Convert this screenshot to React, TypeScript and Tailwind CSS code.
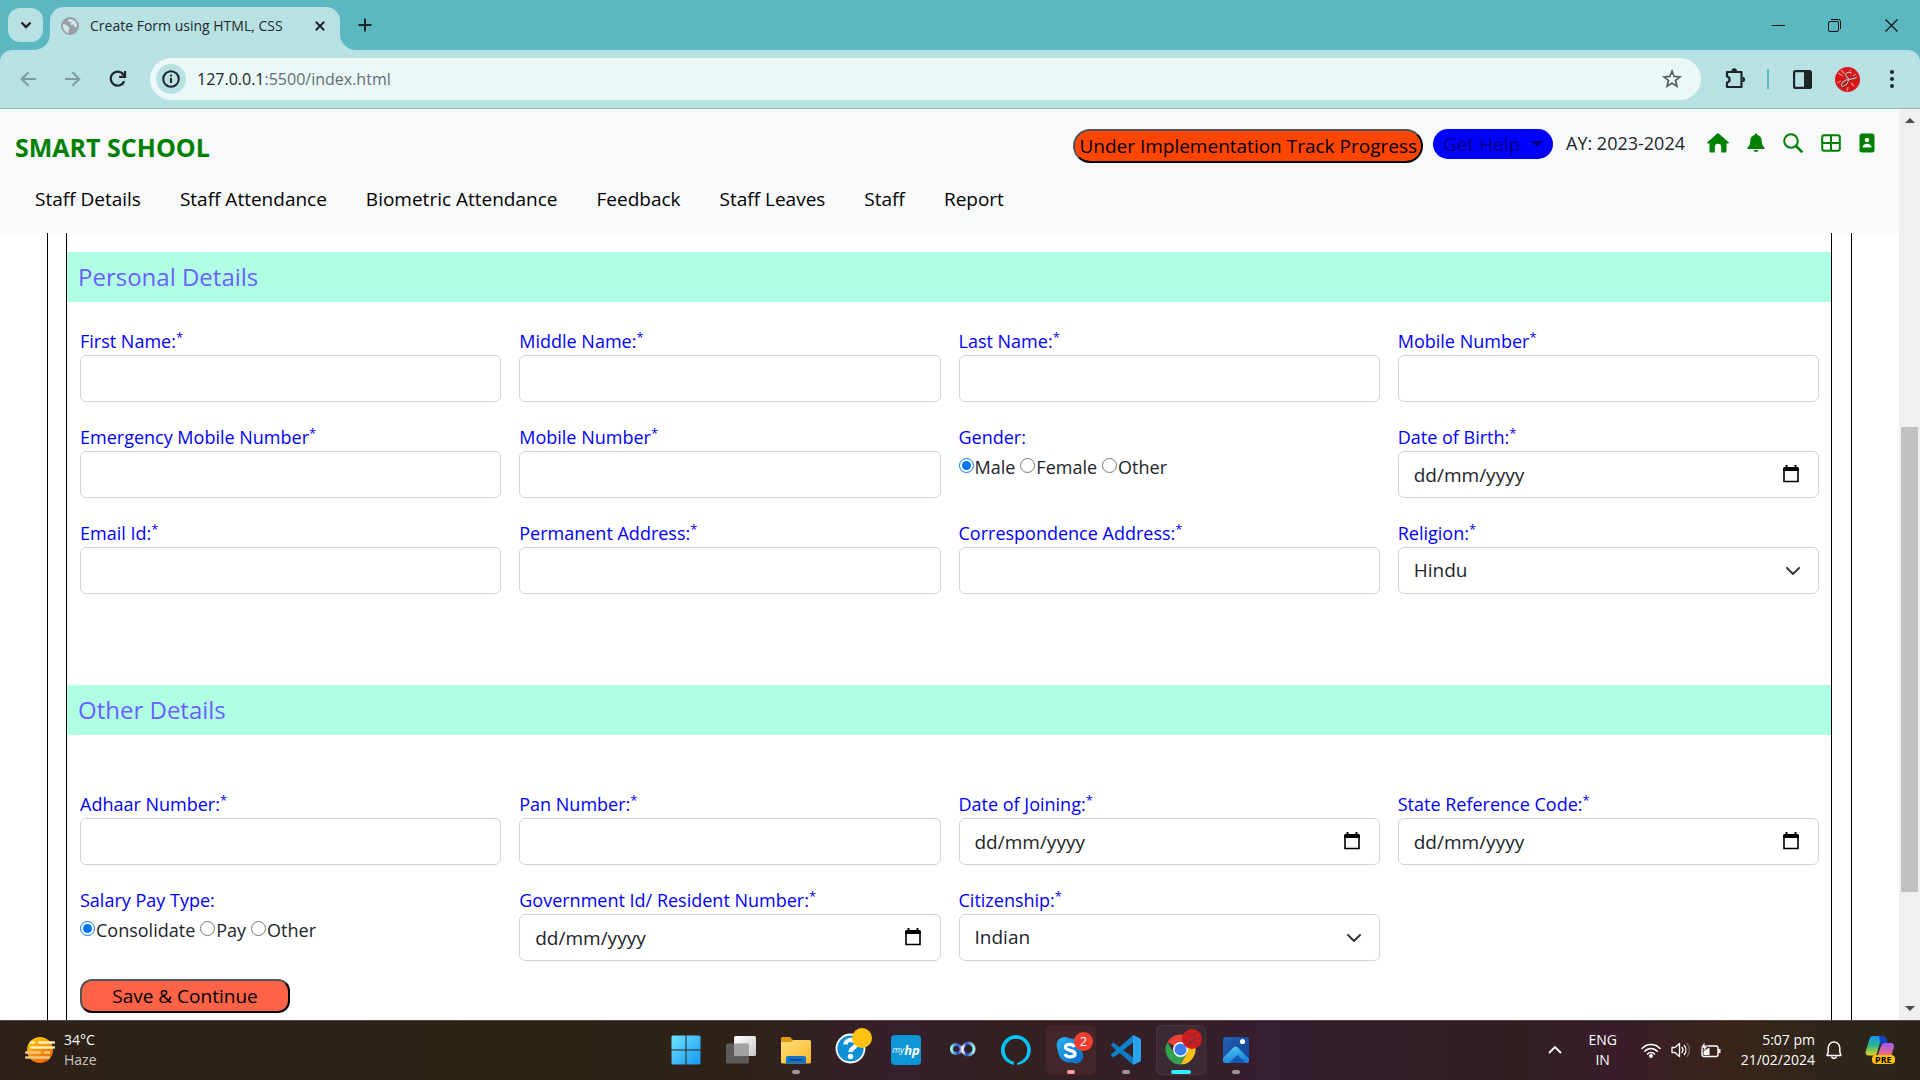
import React from "react";

const NAV = ["Staff Details", "Staff Attendance", "Biometric Attendance", "Feedback", "Staff Leaves", "Staff", "Report"];

/* ---------- browser chrome ---------- */

function TabStrip() {
  return (
    <div className="flex h-[50px] items-stretch bg-[#5bb8c1] text-[#1f2a2c]">
      <div className="flex w-[50px] items-center justify-end pr-[7px] pb-px">
        <button aria-label="Search tabs" className="flex h-[34px] w-[35px] items-center justify-center rounded-xl bg-[#b8e1e4]">
          <svg width="12" height="8" viewBox="0 0 12 8" fill="none" stroke="#1c2527" strokeWidth="2.4"><path d="M1.5 1.5 6 6l4.500-4.500" /></svg>
        </button>
      </div>
      <div className="relative mt-[7px] flex w-[290px] items-center rounded-t-[14px] bg-[#b8e1e4] pr-2 pb-[6px] pl-[11px]">
        <svg className="absolute bottom-0 -left-4" width="16" height="16"><path d="M16 0v16H0A16 16 0 0 0 16 0Z" fill="#b8e1e4" /></svg>
        <svg className="absolute -right-4 bottom-0" width="16" height="16"><path d="M0 0v16h16A16 16 0 0 1 0 0Z" fill="#b8e1e4" /></svg>
        <svg width="18" height="18" viewBox="0 0 18 18">
          <circle cx="9" cy="9" r="9" fill="#98a0a6" />
          <path d="M2 7c2 .3 3.500.3 4 1.800.4 1.200 2.500.6 2.500 2.200 0 1-.9 1.200-.9 2.400 0 1 .4 1.600.2 2.700C4 15.500 1.500 12 2 7Zm5-4.600c1 .8-.6 1.600.4 2.300 1 .6 2.600-.6 3 .6.3 1-1.700 1-1.400 2 .4 1 2-.3 3.200.3 1.300.6 1 2.400 2.700 2.600.6 0 .8-.3 1-.9C16.300 5 12.500 1.500 7 2.400Z" fill="#d3e6e9" />
        </svg>
        <span className="ml-[11px] flex-1 text-sm whitespace-nowrap">Create Form using HTML, CSS</span>
        <button aria-label="Close tab" className="flex size-6 items-center justify-center">
          <svg width="10" height="10" viewBox="0 0 10 10" stroke="#1c2527" strokeWidth="2"><path d="m.8.8 8.400 8.400M9.200.8.8 9.200" /></svg>
        </button>
      </div>
      <button aria-label="New tab" className="ml-3 flex w-[26px] items-center justify-center">
        <svg width="14" height="14" viewBox="0 0 14 14" stroke="#1c2527" strokeWidth="2"><path d="M7 .5v13M.5 7h13" /></svg>
      </button>
      <div className="flex flex-1 justify-end">
        <button aria-label="Minimize" className="flex w-14 items-center justify-center">
          <svg width="13" height="13" viewBox="0 0 13 13" stroke="#111" shapeRendering="crispEdges"><path d="M0 6.500h13" /></svg>
        </button>
        <button aria-label="Restore" className="flex w-14 items-center justify-center">
          <svg width="13" height="13" viewBox="0 0 13 13" fill="none" stroke="#111"><rect x=".5" y="2.500" width="10" height="10" rx="1.500" /><path d="M3 .5h7.500a2 2 0 0 1 2 2V10" /></svg>
        </button>
        <button aria-label="Close" className="flex w-[58px] items-center justify-center">
          <svg width="13" height="13" viewBox="0 0 13 13" stroke="#111" strokeWidth="1.200"><path d="m.5.5 12 12M12.500.5l-12 12" /></svg>
        </button>
      </div>
    </div>
  );
}

function Toolbar() {
  return (
    <div className="bg-[#5bb8c1]">
      <div className="flex h-[59px] items-center rounded-t-xl border-b border-[#8fb5ba] bg-[#b8e1e4]">
        <button aria-label="Back" className="flex w-[55px] items-center justify-center">
          <svg width="16" height="16" viewBox="0 0 16 16" fill="none" stroke="#7d9b9f" strokeWidth="2"><path d="M16 8H2M8.500 1.200 1.700 8l6.800 6.800" /></svg>
        </button>
        <button aria-label="Forward" className="flex w-9 items-center justify-center">
          <svg width="16" height="16" viewBox="0 0 16 16" fill="none" stroke="#7d9b9f" strokeWidth="2"><path d="M0 8h14M7.500 1.200 14.300 8l-6.800 6.800" /></svg>
        </button>
        <button aria-label="Reload" className="flex w-[54px] items-center justify-center">
          <svg width="18" height="18" viewBox="0 0 18 18" fill="none" stroke="#1c2527" strokeWidth="2.300"><path d="M15.200 11.200A7 7 0 1 1 14.400 4.500L16 6.300" /><path d="M16 1v5.800h-5.800" /></svg>
        </button>
        <div className="ml-[5px] flex h-[42px] flex-1 items-center rounded-full bg-[#ebf8f8] pr-[15px] pl-[6px]">
          <button aria-label="Site information" className="flex size-[30px] items-center justify-center rounded-full bg-[#b8e1e4]">
            <svg width="18" height="18" viewBox="0 0 18 18" fill="none" stroke="#1c2527" strokeWidth="2"><circle cx="9" cy="9" r="7.800" /><path d="M9 8v5M9 4.800v1.800" /></svg>
          </button>
          <div className="relative ml-[11px] flex-1">
            <input aria-label="Address" defaultValue="127.0.0.1:5500/index.html" className="w-full bg-transparent text-base text-transparent outline-none" />
            <div aria-hidden="true" className="pointer-events-none absolute inset-0 text-base text-[#5f6f72]">
              <span className="text-[#1c2527]">127.0.0.1</span>:5500/index.html
            </div>
          </div>
          <button aria-label="Bookmark this tab" className="flex size-7 items-center justify-center">
            <svg width="20" height="20" viewBox="0 0 20 20" fill="none" stroke="#5c5f66" strokeWidth="1.800"><path d="m10 2.200 2.200 5.300 5.700.4-4.400 3.700 1.400 5.600L10 14.200l-4.900 3 1.400-5.600-4.400-3.700 5.700-.4Z" /></svg>
          </button>
        </div>
        <button aria-label="Extensions" className="ml-[22px] flex size-6 items-center justify-center">
          <svg width="22" height="22" viewBox="0 0 22 22"><path d="M3 4h14.500v15H3v-4.500c3.500-.6 3.500-5.400 0-6Z" fill="none" stroke="#1c2527" strokeWidth="2.200" strokeLinejoin="round" /><path d="M7.500 3a2.700 2.700 0 0 1 5.400 0ZM18.500 8.800a2.600 2.600 0 0 1 0 5.200Z" fill="#1c2527" /></svg>
        </button>
        <div className="ml-[20px] h-5 w-[2px] bg-[#5bb8c1]" />
        <button aria-label="Side panel" className="ml-[21px] flex size-6 items-center justify-center">
          <svg width="19" height="19" viewBox="0 0 19 19"><rect x="1.100" y="1.100" width="16.800" height="16.800" rx="1.500" fill="none" stroke="#1c2527" strokeWidth="2.200" /><path d="M11 1h6.500v17H11Z" fill="#1c2527" /></svg>
        </button>
        <button aria-label="Profile" className="ml-5 flex size-[26px] items-center justify-center"><Avatar size={25} /></button>
        <button aria-label="Menu" className="mr-4 ml-5 flex w-6 items-center justify-center">
          <svg width="4" height="18" viewBox="0 0 4 18" fill="#1c2527"><circle cx="2" cy="2" r="2" /><circle cx="2" cy="9" r="2" /><circle cx="2" cy="16" r="2" /></svg>
        </button>
      </div>
    </div>
  );
}

function Avatar({ size }: { size: number }) {
  return (
    <svg width={size} height={size} viewBox="0 0 25 25">
      <circle cx="12.500" cy="12.500" r="12.500" fill="#d8161b" />
      <path d="M3 6 8 9M6 3l4 4M2 16l4-2M15 3l1 4M21 7l-3 2M19 19l-3-3M12 24l1-4" stroke="#f08a86" strokeWidth="1.200" />
      <path d="M16 6c-2-2-6 0-5 3 .6 1.600 3 1 2.500 4-.7 4-4 7-6.500 6-1.800-1 0-4 3-5.500s9-1 12-3.500" fill="none" stroke="#7a2023" strokeWidth="2.400" />
      <path d="M16 6c-2-2-6 0-5 3 .6 1.600 3 1 2.500 4-.7 4-4 7-6.500 6-1.800-1 0-4 3-5.500s9-1 12-3.500" fill="none" stroke="#e3c0b8" strokeWidth="1.100" />
    </svg>
  );
}

/* ---------- page ---------- */

function SiteHeader() {
  return (
    <header className="h-[124px] bg-[#f8f9fa] pt-5">
      <div className="flex h-[34px] items-start pr-6 pl-[15px]">
        <h1 className="flex-1 text-[25px] leading-9 font-bold text-[#008000]">SMART SCHOOL</h1>
        <button className="h-[34px] rounded-[17px] border-2 border-black bg-[#ff4500] px-1 text-[19px] leading-[30px] text-black [border-style:outset]">
          Under Implementation Track Progress
        </button>
        <button className="ml-[10px] flex h-[30px] w-[120px] items-center justify-between rounded-full bg-[#0000ff] pr-[10px] pl-[10px] text-[19px] text-[#00007f]">
          Get Help
          <svg width="12" height="6" viewBox="0 0 12 6" fill="currentColor"><path d="M0 0h12L6 6Z" /></svg>
        </button>
        <span className="ml-[13px] w-[141px] text-lg leading-[29px] text-[#212529]">AY: 2023-2024</span>
        <nav aria-label="Shortcuts" className="flex h-7 items-center gap-[18px] text-[#008000]">
          <a href="#home" aria-label="Home">
            <svg width="22" height="20" viewBox="0 0 22 20" fill="currentColor"><path d="M10 .8a1.500 1.500 0 0 1 2 0l9.600 8.400c.6.6.3 1.300-.5 1.300H19.500V18a1.500 1.500 0 0 1-1.500 1.500h-3.800V14a3.200 3.200 0 0 0-6.400 0v5.500H4A1.500 1.500 0 0 1 2.500 18v-7.500H.9c-.8 0-1.100-.7-.5-1.300Z" /></svg>
          </a>
          <a href="#alerts" aria-label="Notifications">
            <svg width="18" height="20" viewBox="0 0 18 20" fill="currentColor"><path d="M9 .5c.9 0 1.300.6 1.400 1.400C13 2.600 14.600 4.500 14.700 7.500c.1 3.500.7 5.500 2.800 7v1.500H.5v-1.500c2.100-1.500 2.700-3.500 2.800-7C3.400 4.500 5 2.600 7.600 1.900 7.700 1.100 8.100.5 9 .5ZM6.500 17h5a2.600 2.600 0 0 1-5 0Z" /></svg>
          </a>
          <a href="#search" aria-label="Search">
            <svg width="20" height="20" viewBox="0 0 20 20" fill="none" stroke="currentColor" strokeWidth="2"><circle cx="8" cy="8" r="6.800" /><path d="m13 13 6.300 6.300" strokeWidth="2.600" /></svg>
          </a>
          <a href="#grid" aria-label="Tables">
            <svg width="20" height="20" viewBox="0 0 20 20" fill="none" stroke="currentColor" strokeWidth="2"><rect x="1.200" y="2.200" width="17.600" height="15.600" rx="2" /><path d="M10 2v16M1 10h18" /></svg>
          </a>
          <a href="#contacts" aria-label="Contacts">
            <svg width="16" height="20" viewBox="0 0 16 20"><rect x=".5" y=".5" width="15" height="19" rx="2.500" fill="currentColor" /><circle cx="8" cy="7" r="2.300" fill="#f8f9fa" /><path d="M3.500 14.500c0-5 9-5 9 0Z" fill="#f8f9fa" /></svg>
          </a>
        </nav>
      </div>
      <nav aria-label="Main" className="flex gap-[39px] pt-[22px] pl-[35px] text-[19px] leading-7 text-black">
        {NAV.map((n) => (
          <a key={n} href="#section" className="whitespace-nowrap">{n}</a>
        ))}
      </nav>
    </header>
  );
}

const BOX = "block h-[47px] w-full rounded-md border border-[#ced4da] bg-white px-[15px] text-[19px] text-[#212529]";

type FieldProps = { id: string; label: string; star?: boolean; kind?: "text" | "date" | "select"; value?: string };

function Caption({ children, star }: { children: React.ReactNode; star?: boolean }) {
  return (
    <>
      {children}
      {star && <sup className="text-[13px]">*</sup>}
    </>
  );
}

function Field({ id, label, star = true, kind = "text", value }: FieldProps) {
  return (
    <div>
      <label htmlFor={id} className="block h-[30px] text-lg leading-8 whitespace-nowrap text-[#0000ff]">
        <Caption star={star}>{label}</Caption>
      </label>
      {kind === "text" && <input id={id} type="text" className={BOX} />}
      {kind === "date" && (
        <div className="relative">
          <input id={id} type="text" placeholder="dd/mm/yyyy" className={BOX + " placeholder:text-[#212529]"} />
          <button aria-label={"Pick " + label} className="absolute top-[14px] right-5">
            <svg width="16" height="19" viewBox="0 0 16 19"><path d="M1 5v11.500h14V5" fill="none" stroke="#000" strokeWidth="1.600" /><path d="M0 3.500A1.500 1.500 0 0 1 1.500 2H2.500V0h2v2h7V0h2v2h1A1.500 1.500 0 0 1 16 3.500V6H0Z" /></svg>
          </button>
        </div>
      )}
      {kind === "select" && (
        <div className="relative">
          <select id={id} defaultValue={value} className={BOX + " appearance-none"}>
            <option>{value}</option>
          </select>
          <svg className="pointer-events-none absolute top-5 right-[19px]" width="14" height="8" viewBox="0 0 14 8" fill="none" stroke="#343a40" strokeWidth="2" strokeLinecap="round" strokeLinejoin="round"><path d="m1 1 6 6 6-6" /></svg>
        </div>
      )}
    </div>
  );
}

function Radios({ name, label, options }: { name: string; label: string; options: string[] }) {
  return (
    <fieldset>
      <legend className="block h-[30px] text-lg leading-8 text-[#0000ff]">{label}</legend>
      <div className="flex gap-[5px] text-lg leading-8 text-[#212529]">
        {options.map((o, i) => (
          <label key={o} className="flex items-start">
            <input type="radio" name={name} defaultChecked={i === 0} className="mt-[7px] mr-px size-[15px] accent-[#0075ff]" />
            {o}
          </label>
        ))}
      </div>
    </fieldset>
  );
}

function SectionTitle({ children }: { children: React.ReactNode }) {
  return <h2 className="h-[50px] bg-[#b0ffe5] pl-[11px] text-2xl leading-[50px] font-medium text-[#6a5fff]">{children}</h2>;
}

function StaffForm() {
  return (
    <form className="mx-[47px] flex-1 border-x border-black pr-[19px] pl-[18px]">
      <div className="h-full border-x border-black pt-[19px]">
        <SectionTitle>Personal Details</SectionTitle>
        <div className="grid grid-cols-4 gap-x-[18px] gap-y-[19px] pt-[23px] pr-3 pb-[91px] pl-[13px]">
          <Field id="first" label="First Name:" />
          <Field id="middle" label="Middle Name:" />
          <Field id="last" label="Last Name:" />
          <Field id="mobile" label="Mobile Number" />
          <Field id="emergency" label="Emergency Mobile Number" />
          <Field id="mobile2" label="Mobile Number" />
          <Radios name="gender" label="Gender:" options={["Male", "Female", "Other"]} />
          <Field id="dob" label="Date of Birth:" kind="date" />
          <Field id="email" label="Email Id:" />
          <Field id="permanent" label="Permanent Address:" />
          <Field id="correspondence" label="Correspondence Address:" />
          <Field id="religion" label="Religion:" kind="select" value="Hindu" />
        </div>
        <SectionTitle>Other Details</SectionTitle>
        <div className="grid grid-cols-4 gap-x-[18px] gap-y-[19px] pt-[53px] pr-3 pl-[13px]">
          <Field id="adhaar" label="Adhaar Number:" />
          <Field id="pan" label="Pan Number:" />
          <Field id="joining" label="Date of Joining:" kind="date" />
          <Field id="state" label="State Reference Code:" kind="date" />
          <Radios name="pay" label="Salary Pay Type:" options={["Consolidate", "Pay", "Other"]} />
          <Field id="gov" label="Government Id/ Resident Number:" kind="date" />
          <Field id="citizenship" label="Citizenship:" kind="select" value="Indian" />
        </div>
        <button type="button" className="mt-[18px] mb-[7px] ml-[13px] block h-[34px] w-[210px] rounded-xl border-2 border-black bg-[#ff6347] text-[19px] leading-[30px] text-black [border-style:outset]">
          Save &amp; Continue
        </button>
      </div>
    </form>
  );
}

function ScrollBar() {
  return (
    <div className="flex w-[21px] flex-col items-center bg-[#f0f0f0] py-[9px]">
      <svg width="10" height="5" viewBox="0 0 10 5" fill="#4a4a4a"><path d="M0 5h10L5 0Z" /></svg>
      <div className="grow-[304]" />
      <div className="w-[17px] grow-[465] bg-[#c1c1c1]" />
      <div className="grow-[114]" />
      <svg width="10" height="5" viewBox="0 0 10 5" fill="#4a4a4a"><path d="M0 0h10L5 5Z" /></svg>
    </div>
  );
}

/* ---------- taskbar ---------- */

const I = { width: 30, height: 30, viewBox: "0 0 30 30" };

const StartIcon = () => (
  <svg {...I}>
    <defs><linearGradient id="win" x1="0" y1="0" x2="1" y2="1" gradientUnits="objectBoundingBox"><stop offset="0" stopColor="#6fe6ff" /><stop offset="1" stopColor="#1495f5" /></linearGradient></defs>
    <path d="M2 .5h12.500v14H.5V2A1.500 1.500 0 0 1 2 .5ZM15.500.5H28A1.500 1.500 0 0 1 29.500 2v12.500h-14ZM.5 15.500h14v14H2A1.500 1.500 0 0 1 .5 28ZM15.500 15.500h14V28a1.500 1.500 0 0 1-1.500 1.500H15.500Z" fill="url(#win)" />
  </svg>
);
const TaskViewIcon = () => (
  <svg {...I}>
    <defs><linearGradient id="tv" x2="1" y2="1"><stop stopColor="#fff" /><stop offset="1" stopColor="#c9c9c9" /></linearGradient></defs>
    <rect x="0" y="8.500" width="23" height="20" rx="1.500" fill="#5d5a58" />
    <rect x="8" y="1" width="22" height="20" rx="1.500" fill="url(#tv)" />
    <path d="M8 8.500h15V21H8Z" fill="#a3a1a1" />
  </svg>
);
const FolderIcon = () => (
  <svg {...I}>
    <defs><linearGradient id="fo" x2="1" y2="1"><stop stopColor="#ffe07a" /><stop offset="1" stopColor="#fdb62c" /></linearGradient></defs>
    <path d="M0 3.500A1.500 1.500 0 0 1 1.500 2H9l3 3v4H0Z" fill="#e09a0c" />
    <path d="M0 7h10l2.500-2H28.500A1.500 1.500 0 0 1 30 6.500v20.500a1.500 1.500 0 0 1-1.500 1.500h-27A1.500 1.500 0 0 1 0 27Z" fill="url(#fo)" />
    <path d="M5 28.500V23a2 2 0 0 1 2-2h16a2 2 0 0 1 2 2v5.500Z" fill="#1074cf" /><path d="M8.500 24.800h13" stroke="#0a3f7d" strokeWidth="1.500" />
  </svg>
);
const HelpIcon = () => (
  <svg width="38" height="38" viewBox="0 0 38 38">
    <circle cx="16.500" cy="21.500" r="14" fill="#0b8fd6" stroke="#fff" strokeWidth="1.800" />
    <path d="M11.500 17.500c0-6 10.500-6 10.500-.5 0 4-5.500 4-5.500 8" fill="none" stroke="#fff" strokeWidth="4.200" /><circle cx="16.500" cy="29.500" r="2.700" fill="#fff" />
    <circle cx="28" cy="11" r="10" fill="#ffc20e" />
  </svg>
);
const MyHpIcon = () => (
  <div className="flex size-[30px] items-center justify-center rounded-sm bg-[#0c96d5] text-white italic">
    <span className="text-[9px]">my</span><span className="text-[13px] font-bold">hp</span>
  </div>
);
const InfinityIcon = () => (
  <svg {...I}>
    <defs><linearGradient id="inf"><stop stopColor="#8df0e4" /><stop offset=".3" stopColor="#1a49c9" /><stop offset=".5" stopColor="#fff" /><stop offset=".65" stopColor="#1a49c9" /><stop offset="1" stopColor="#9df5e6" /></linearGradient></defs>
    <path d="M16 14.500c-2.500-4-4-5-6-5a4.500 4.500 0 0 0 0 9c2.500 0 4-1.200 6-4.500s3.500-6 6-6a6 6 0 0 1 0 12c-2.500 0-4-1.500-6-5.500Z" fill="none" stroke="url(#inf)" strokeWidth="3.200" />
  </svg>
);
const AlexaIcon = () => (
  <svg {...I}><path d="M12.800 29.900A15 15 0 1 1 17 29.900c-1.800 0-1.700-1.800.5-2.500 5-1.800 8.700-6 8.700-12.400a11.200 11.200 0 1 0-22.400 0c0 6 4 10.500 9 11.500Z" fill="#06c3f7" /></svg>
);
const SkypeIcon = () => (
  <svg width="38" height="38" viewBox="0 0 38 38">
    <defs><linearGradient id="sk" x2="1" y2="1"><stop stopColor="#29b4f2" /><stop offset="1" stopColor="#0767c4" /></linearGradient></defs>
    <path d="M9 8c3-1.500 6-1 8 .5C26 8 31 14 30 22c2 3 1.500 7-1 9.500s-6 2.500-9 1C12 33.500 6 28 6 20.500 4 16 4 10 9 8Z" fill="url(#sk)" />
    <path d="M22.500 17c-1.500-3.500-9-3.500-9 .3 0 4 9.500 2.200 9.500 6.500 0 4-8.500 4.200-10 .2" fill="none" stroke="#fff" strokeWidth="3.200" />
  </svg>
);
const CodeIcon = () => (
  <svg {...I}>
    <path d="M0 9.500 2.500 7.500 22 22.500v7.200L.3 10.700Z" fill="#1179c4" />
    <path d="M0 20.500 2.500 22.500 22 7.500V.3L.3 19.300Z" fill="#0d84d1" />
    <path d="M22 0l6.800 3.200A2 2 0 0 1 30 5v20a2 2 0 0 1-1.200 1.800L22 30Z" fill="#2ba4ee" />
  </svg>
);
const ChromeIcon = () => (
  <svg width="38" height="38" viewBox="0 0 38 38">
    <g transform="translate(1.500 6.500)">
      <path d="M15 15 2 7.500A15 15 0 0 1 28 7.500Z" fill="#ea4335" />
      <path d="M15 7.500h13A15 15 0 0 1 15 30l6.500-11.200Z" fill="#fbc116" />
      <path d="M2 7.500A15 15 0 0 0 15 30l6.500-11.200L15 15l-6.500 3.700Z" fill="#34a04f" />
      <circle cx="15" cy="15" r="7.500" fill="#fff" /><circle cx="15" cy="15" r="6" fill="#3b7ded" />
    </g>
    <svg x="18" y="1" width="20" height="20" viewBox="0 0 25 25"><circle cx="12.500" cy="12.500" r="12.500" fill="#d11b1f" /><path d="M5 5l4 4M3 15l4-2M16 3l1 4M20 20l-3-3M11 9c3-3 6-2 4 2s-4 9-8 9 5-6 15-9" fill="none" stroke="#8d2c2f" strokeWidth="1.600" /></svg>
  </svg>
);
const PhotosIcon = () => (
  <svg {...I}>
    <defs>
      <linearGradient id="ph" y2="1"><stop stopColor="#2560b8" /><stop offset="1" stopColor="#123f8f" /></linearGradient>
      <linearGradient id="pm" y2="1" x2=".4"><stop stopColor="#54d3f9" /><stop offset="1" stopColor="#1b7fd8" /></linearGradient>
    </defs>
    <rect x="2" y="2" width="26" height="26" rx="2.500" fill="url(#ph)" />
    <path d="M2 23 12.500 12.500a3 3 0 0 1 4.200 0L28 23.500v2a2.500 2.500 0 0 1-2.500 2.500h-21A2.500 2.500 0 0 1 2 25.500Z" fill="url(#pm)" />
    <path d="M8 28l8.500-8 8.500 8Z" fill="#1559b5" /><circle cx="21.500" cy="6.500" r="2.600" fill="#fff" />
  </svg>
);

const APPS: { name: string; icon: React.ReactNode; cell?: string; dot?: string }[] = [
  { name: "Start", icon: <StartIcon /> },
  { name: "Task view", icon: <TaskViewIcon /> },
  { name: "Files", icon: <FolderIcon />, dot: "w-2 bg-[#9c9496]" },
  { name: "Support", icon: <span className="-mt-2 ml-1"><HelpIcon /></span> },
  { name: "myHP", icon: <MyHpIcon /> },
  { name: "Dev tools", icon: <InfinityIcon /> },
  { name: "Alexa", icon: <AlexaIcon /> },
  {
    name: "Skype",
    icon: (
      <span className="relative mb-[3px]">
        <SkypeIcon />
        <span className="absolute top-[2px] -right-[3px] size-[19px] rounded-full bg-[#f23d33] text-center text-[13px] leading-[19px] text-white">2</span>
      </span>
    ),
    cell: "bg-[#44262a]",
    dot: "w-2 bg-[#ff99a4]",
  },
  { name: "Code", icon: <CodeIcon />, dot: "w-2 bg-[#9c9496]" },
  { name: "Chrome", icon: <span className="mb-[6px] ml-1"><ChromeIcon /></span>, cell: "bg-[#3b2a33] ring-1 ring-inset ring-[#47363e]", dot: "w-5 bg-[#2ff0ff]" },
  { name: "Photos", icon: <PhotosIcon />, dot: "w-2 bg-[#9c9496]" },
];

function Taskbar() {
  return (
    <footer className="grid h-[60px] grid-cols-[1fr_auto_1fr] items-center border-t border-[#4a4740] bg-[linear-gradient(90deg,#2f1f1a_0%,#2b2316_7%,#2a2415_30%,#2f2219_38%,#35202c_47%,#33201f_53%,#351f30_66%,#311f22_79%,#3a1c2b_84%,#3a2419_90%,#2e2619_95%,#2a2418_100%)] pb-px text-sm text-white">
      <div className="flex items-center pl-[25px]">
        <svg width="30" height="26" viewBox="0 0 30 26">
          <defs><linearGradient id="sun" x2=".6" y2="1"><stop stopColor="#ffd400" /><stop offset="1" stopColor="#f0660c" /></linearGradient></defs>
          <circle cx="15" cy="13" r="13" fill="url(#sun)" />
          <path d="M6 5.500h3M14 5.500h15M6 10.500h23" stroke="#fdeeb5" strokeWidth="2.400" strokeLinecap="round" />
          <path d="M1 15.500h14M20 15.500h4M1 20.500h23" stroke="#ecc983" strokeWidth="2.400" strokeLinecap="round" />
        </svg>
        <div className="ml-[9px] leading-5">
          <div>34°C</div>
          <div className="text-[#c9c5c0]">Haze</div>
        </div>
      </div>
      <div className="flex gap-[5px] pl-[2px]">
        {APPS.map((a) => (
          <button key={a.name} aria-label={a.name} className={"relative flex size-[50px] items-center justify-center rounded-md " + (a.cell ?? "")}>
            {a.icon}
            {a.dot && <span className={"absolute bottom-px left-1/2 h-1 -translate-x-1/2 rounded-full " + a.dot} />}
          </button>
        ))}
      </div>
      <div className="flex items-center justify-end pr-[25px]">
        <svg width="14" height="8" viewBox="0 0 14 8" fill="none" stroke="#fff" strokeWidth="1.800"><path d="m1 7 6-6 6 6" /></svg>
        <div className="ml-[18px] w-[46px] text-center leading-5">ENG<br />IN</div>
        <div className="ml-[15px] flex items-center gap-[10px]">
          <svg width="20" height="16" viewBox="0 0 20 16" fill="none" stroke="#fff" strokeWidth="1.500" strokeLinecap="round"><path d="M1 6.500a12 12 0 0 1 18 0M3.800 9.300a8.200 8.200 0 0 1 12.400 0M6.500 12a4.700 4.700 0 0 1 7 0" /><circle cx="10" cy="14" r="1.200" fill="#fff" /></svg>
          <svg width="20" height="16" viewBox="0 0 20 16" fill="none" stroke="#fff" strokeWidth="1.300" strokeLinecap="round" strokeLinejoin="round"><path d="M1 5.500h3L8.500 1.500v13L4 10.500H1ZM11 5.500a4 4 0 0 1 0 5M13.300 3.500a7 7 0 0 1 0 9" /><path d="M16 1.500a10 10 0 0 1 0 13" stroke="#7a6a60" /></svg>
          <svg width="20" height="16" viewBox="0 0 20 16"><rect x="1" y="4" width="16" height="10.500" rx="2" fill="none" stroke="#fff" strokeWidth="1.400" /><path d="M17.500 7h2v4h-2ZM2.500 13V9l6-3.500V13Z" fill="#fff" /><path d="M3.500 0 0 6h3L2 10l5-6H4Z" fill="#fff" stroke="#3a2419" strokeWidth=".5" /></svg>
        </div>
        <div className="ml-[20px] text-right leading-5">5:07 pm<br />21/02/2024</div>
        <svg className="ml-[11px]" width="16" height="19" viewBox="0 0 16 19" fill="none" stroke="#fff" strokeWidth="1.500" strokeLinejoin="round"><path d="M8 1a5.800 5.800 0 0 0-5.800 5.800V11L1 14.500h14L13.800 11V6.800A5.800 5.800 0 0 0 8 1Z" /><path d="M5.500 15.500a2.600 2.600 0 0 0 5 0" /></svg>
        <div className="relative ml-[23px]">
          <svg width="30" height="30" viewBox="0 0 30 30">
            <defs>
              <linearGradient id="ca" y2="1" x2="0"><stop stopColor="#1592f0" /><stop offset=".5" stopColor="#2fb58b" /><stop offset="1" stopColor="#e8d219" /></linearGradient>
              <linearGradient id="cb" y2="1" x2="0"><stop stopColor="#a45af0" /><stop offset="1" stopColor="#fb6d61" /></linearGradient>
            </defs>
            <path d="M8 1h9L12 18c-.7 2-2 2.500-4 2.500H4C1 20.500 0 18.500.8 16L4.500 4C5.200 2 6 1 8 1Z" fill="url(#ca)" />
            <path d="M14 1h4c2 0 2.800 1 3.300 2.500L22.500 8H19c-2 0-3 1-3.500 2.500Z" fill="#1443c8" />
            <path d="M20 8h5.500c3 0 4 2 3.300 4.500L26 22H12l4-11c.8-2 2-3 4-3Z" fill="url(#cb)" />
          </svg>
          <span className="absolute top-5 left-[7px] rounded-sm bg-[#ffc400] px-[3px] text-[9px] leading-[9px] font-bold text-black">PRE</span>
        </div>
      </div>
    </footer>
  );
}

export default function App() {
  return (
    <div className="flex min-h-screen flex-col bg-white font-['Open_Sans','Noto_Sans',sans-serif]">
      <TabStrip />
      <Toolbar />
      <main className="flex flex-1">
        <div className="flex flex-1 flex-col">
          <SiteHeader />
          <StaffForm />
        </div>
        <ScrollBar />
      </main>
      <Taskbar />
    </div>
  );
}
